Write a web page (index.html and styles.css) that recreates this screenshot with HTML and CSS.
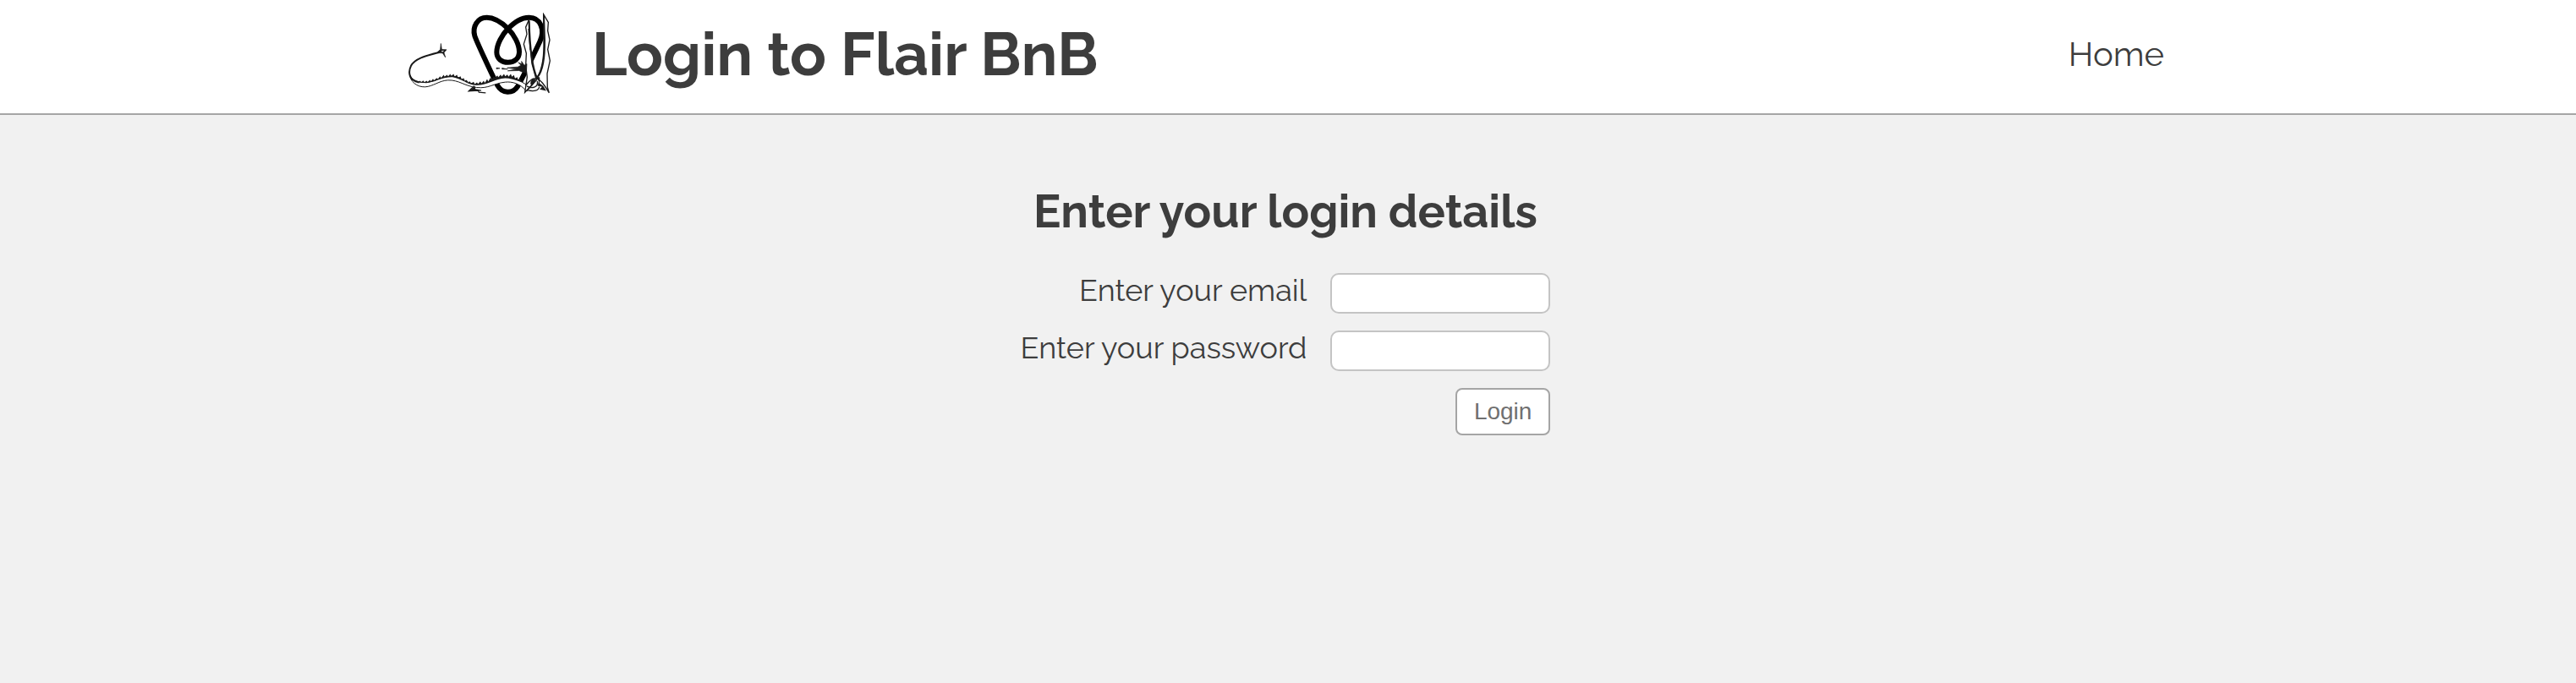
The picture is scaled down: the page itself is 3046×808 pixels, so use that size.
FILE: index.html
```html
<!DOCTYPE html>
<html lang="en">
<head>
<meta charset="utf-8">
<meta name="viewport" content="width=device-width, initial-scale=1">
<title>Login to Flair BnB</title>
<link rel="stylesheet" href="styles.css">
</head>
<body>
<header class="site-header">
  <div class="header-inner">
    <svg class="logo" viewBox="42 45 504 291" role="img" aria-label="Flair BnB logo">
      <path d="M395 100C370 76 342 61 320 61C286 61 268 94 277 126C281 140 340 268 358 302C374 331 412 333 430 304C446 276 492 180 508 146C528 104 510 61 470 61C441 61 420 76 395 100C374 122 355 156 355 184C355 208 374 220 395 220C418 220 435 206 435 182C435 156 417 122 395 100Z" fill="none" stroke="#000" stroke-width="18"/>
      <path d="M46 262C54 285 80 292 105 291C138 288 160 268 198 269C232 272 255 298 284 298C325 297 350 273 385 272C420 272 441 288 462 300L460 322C440 296 410 287 385 290C345 294 325 314 284 309C240 304 222 282 182 283C150 285 130 305 101 307C72 308 48 288 46 262Z" fill="#fff" stroke="#1a1a1a" stroke-width="3"/>
      <path d="M78 291L82 285L88 290L94 284L99 290L106 285L110 290L118 282L122 287L129 278L133 284L142 275L146 280L154 269L158 275L167 264L170 271L179 264L183 270L190 261L194 268L202 261L206 270L214 264L218 274L227 269L230 281L238 275L241 287L249 282L252 292L260 287L264 295L273 289L277 297L285 291L289 296L297 287L301 295L309 285L313 293L321 279L325 288L333 274L337 281L345 269L349 275L357 266L361 272L369 263L373 270L381 261L385 269L393 263L397 271L405 261L409 271L416 265L420 277L428 272L431 282L439 278L443 290C420 281 400 276 385 276C350 277 325 300 284 301C250 300 232 277 198 272C160 271 138 290 105 293Z" fill="#1a1a1a"/>
      <path d="M152 184C110 195 66 204 51 232C44 246 44 256 47 266C51 280 65 288 80 291" fill="none" stroke="#1a1a1a" stroke-width="6"/>
      <path d="M157 153L160 174L177 175L168 185L173 202L163 187L142 186L155 174Z" fill="#1a1a1a" stroke="#1a1a1a" stroke-width="2"/>
      <path d="M158 179L169 178L162 183Z" fill="#fff"/>
      <path d="M275 304L256 322L290 320L292 326L316 328M257 320L280 316L300 320" fill="none" stroke="#1a1a1a" stroke-width="4"/>
      <path d="M278 304L254 323L280 320Z" fill="#1a1a1a"/>
      <path d="M469 69L458 95L462 120L451 155L460 188L458 232L463 272L455 326L496 283L480 225L471 140Z" fill="#fff" stroke="#1a1a1a" stroke-width="4"/>
      <path d="M521 49L538 78L536 108L543 140L536 174L544 214L534 260L535 308L541 328C524 300 511 280 495 278C513 254 522 212 522 160Z" fill="#fff" stroke="#1a1a1a" stroke-width="4"/>
      <path d="M522 52L525 140C526 205 516 252 500 272M470 72C472 160 480 239 500 280M469 100L475 175" fill="none" stroke="#1a1a1a" stroke-width="6"/>
      <path d="M354 239L366 241L354 243ZM374 240L394 244L374 244ZM392 239L430 236L441 230L431 220L444 226L443 216L453 230L462 225L460 258L446 254L434 249L394 250L426 244Z" fill="#1a1a1a" stroke="#1a1a1a" stroke-width="2"/>
      <path d="M458 302C466 290 482 274 492 278C491 294 474 306 461 322M462 304C478 314 504 310 499 286M464 318C486 325 505 320 506 306" fill="none" stroke="#1a1a1a" stroke-width="4"/>
      <path d="M488 276C470 284 474 301 479 302C488 294 491 286 488 276ZM497 268L508 274L507 294L520 304L531 321L507 316L516 307L500 303L504 288Z" fill="#1a1a1a"/>
    </svg>
    <h1 class="site-title">Login to Flair BnB</h1>
    <nav class="site-nav"><a class="nav-link" href="#">Home</a></nav>
  </div>
</header>
<main class="page">
  <form class="login-form">
    <h2 class="form-title">Enter your login details</h2>
    <label class="form-label" for="email">Enter your email</label>
    <input class="form-input" id="email" type="email" name="email">
    <label class="form-label" for="password">Enter your password</label>
    <input class="form-input" id="password" type="password" name="password">
    <button class="form-button" type="submit">Login</button>
  </form>
</main>
</body>
</html>
```
FILE: styles.css
```css
* {
  box-sizing: border-box;
}

body {
  margin: 0;
  min-height: 100vh;
  background: #f1f1f1;
  color: #3d3d3d;
  font-family: Raleway, Lato, "Open Sans", sans-serif;
}

.site-header {
  background: #fff;
  border-bottom: 2px solid #a5a5a5;
}

.header-inner {
  display: flex;
  align-items: center;
  width: 70%;
  margin: 0 auto;
  padding: 15px 30px 21px 26px;
}

.logo {
  width: 168px;
  height: 98px;
}

.site-title {
  margin: 0 0 0 49px;
  font-size: 71px;
  line-height: 84px;
}

.site-nav {
  margin-left: auto;
}

.nav-link {
  color: inherit;
  font-size: 40px;
  line-height: 48px;
  text-decoration: none;
}

.page {
  display: flex;
  justify-content: center;
  padding: 81px 34px 80px 28px;
}

.login-form {
  display: grid;
  grid-template-columns: auto 260px;
  column-gap: 28px;
  row-gap: 20px;
}

.form-title {
  grid-column: 1 / -1;
  margin: 0 0 20px;
  font-size: 54px;
  line-height: 66px;
  text-align: center;
}

.form-label {
  font-size: 36px;
  line-height: 40px;
  text-align: right;
}

.form-input {
  width: 100%;
  height: 48px;
  padding: 4px 12px;
  border: 2px solid #c4c4c4;
  border-radius: 10px;
  background: #fff;
  font-size: 27px;
}

.form-button {
  grid-column: 2;
  justify-self: end;
  padding: 10px 20px;
  border: 2px solid #a5a5a5;
  border-radius: 8px;
  background: #fff;
  color: #707070;
  font-family: "Liberation Sans", Arial, sans-serif;
  font-size: 28px;
  line-height: 32px;
}
```
